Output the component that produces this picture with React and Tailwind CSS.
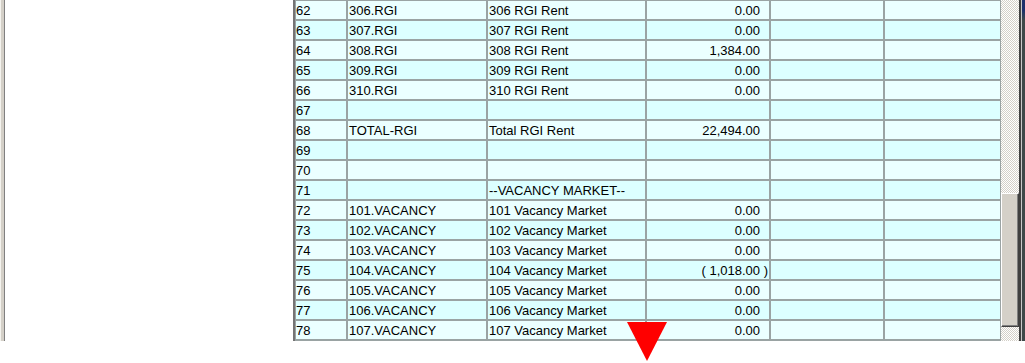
import React from "react";

const rows = [
  ["62", "306.RGI", "306 RGI Rent", "0.00"],
  ["63", "307.RGI", "307 RGI Rent", "0.00"],
  ["64", "308.RGI", "308 RGI Rent", "1,384.00"],
  ["65", "309.RGI", "309 RGI Rent", "0.00"],
  ["66", "310.RGI", "310 RGI Rent", "0.00"],
  ["67", "", "", ""],
  ["68", "TOTAL-RGI", "Total RGI Rent", "22,494.00"],
  ["69", "", "", ""],
  ["70", "", "", ""],
  ["71", "", "--VACANCY MARKET--", ""],
  ["72", "101.VACANCY", "101 Vacancy Market", "0.00"],
  ["73", "102.VACANCY", "102 Vacancy Market", "0.00"],
  ["74", "103.VACANCY", "103 Vacancy Market", "0.00"],
  ["75", "104.VACANCY", "104 Vacancy Market", "( 1,018.00 )"],
  ["76", "105.VACANCY", "105 Vacancy Market", "0.00"],
  ["77", "106.VACANCY", "106 Vacancy Market", "0.00"],
  ["78", "107.VACANCY", "107 Vacancy Market", "0.00"],
];

function Amount({ v }) {
  if (!v) return null;
  const neg = v.startsWith("(");
  return (
    <span className="whitespace-pre">
      {v}
      {!neg && <span className="invisible whitespace-pre">{" )"}</span>}
    </span>
  );
}

export default function App() {
  return (
    <div
      className="relative w-[1025px] h-[363px] bg-white overflow-hidden text-black"
      style={{ fontFamily: '"Liberation Sans", Arial, sans-serif' }}
    >
      <div className="flex h-[341px]">
        {/* left panel edge */}
        <div className="flex h-full">
          <div className="w-px bg-[#f4f3ee]" />
          <div className="w-[3px] bg-[#d4d0c8]" />
          <div className="w-px bg-[#808080]" />
        </div>
        <div className="w-[288px] bg-white" />
        {/* table */}
        <div className="border-l-2 border-[#747474] h-full">
          <div className="grid grid-cols-[50px_138px_157px_122px_112px_115px] gap-[2px] bg-[#9aa3a3] pt-px pl-px pr-px pb-[2px] text-[13px] leading-[18px]">
            {rows.map((r, i) => {
              const bg = i % 2 === 0 ? "bg-[#ebffff]" : "bg-[#dcffff]";
              return (
                <React.Fragment key={r[0]}>
                  <div className={`${bg} h-[18px] pt-px whitespace-nowrap`}>{r[0]}</div>
                  <div className={`${bg} h-[18px] pt-px pl-px whitespace-nowrap`}>{r[1]}</div>
                  <div className={`${bg} h-[18px] pt-px pl-px whitespace-nowrap`}>{r[2]}</div>
                  <div className={`${bg} h-[18px] pt-px pr-px text-right whitespace-nowrap`}>
                    <Amount v={r[3]} />
                  </div>
                  <div className={`${bg} h-[18px]`} />
                  <div className={`${bg} h-[18px]`} />
                </React.Fragment>
              );
            })}
          </div>
        </div>
        {/* scrollbar */}
        <div className="w-[18px] h-full bg-[repeating-conic-gradient(#d4d0c8_0_25%,#ffffff_0_50%)] bg-[length:2px_2px] flex flex-col">
          <div className="mt-[193px] h-[134px] bg-[#d4d0c8] border-l border-t border-white border-r border-b border-r-[#404040] border-b-[#404040] shadow-[inset_-1px_-1px_#808080]" />
        </div>
        {/* right edge */}
        <div className="flex h-full">
          <div className="w-[2px] bg-[#404040]" />
          <div className="w-px bg-[#c8c8c8]" />
          <div className="w-[3px] bg-gradient-to-b from-[#1c2f6a] from-[3%] to-[#3e4848] to-[6%]" />
        </div>
      </div>
      {/* red marker */}
      <svg className="absolute left-[627px] top-[322px]" width="40" height="40" viewBox="0 0 40 40">
        <polygon points="0,0 40,0 20,39" fill="#ff0000" />
      </svg>
    </div>
  );
}
